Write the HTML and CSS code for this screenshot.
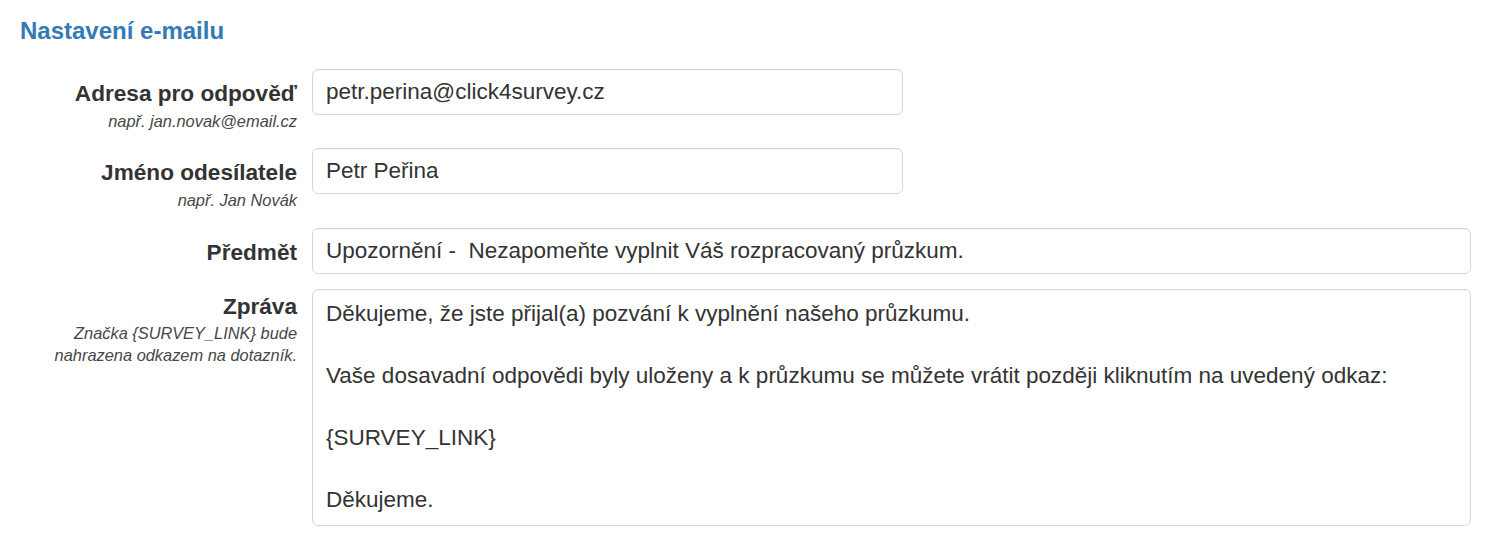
FILE: index.html
```html
<!DOCTYPE html>
<html lang="cs">
<head>
<meta charset="utf-8">
<title>Nastavení e-mailu</title>
<link rel="stylesheet" href="styles.css">
</head>
<body>
<div class="page">
  <h2 class="title">Nastavení e-mailu</h2>
  <form class="form">
    <div class="row">
      <div class="label-col">
        <label class="label" for="reply">Adresa pro odpověď</label>
        <div class="hint">např. jan.novak@email.cz</div>
      </div>
      <div class="field-col">
        <input class="control narrow" id="reply" type="text" value="petr.perina@click4survey.cz">
      </div>
    </div>
    <div class="row">
      <div class="label-col">
        <label class="label" for="sender">Jméno odesílatele</label>
        <div class="hint">např. Jan Novák</div>
      </div>
      <div class="field-col">
        <input class="control narrow" id="sender" type="text" value="Petr Peřina">
      </div>
    </div>
    <div class="row">
      <div class="label-col">
        <label class="label" for="subject">Předmět</label>
      </div>
      <div class="field-col">
        <input class="control" id="subject" type="text" value="Upozornění -  Nezapomeňte vyplnit Váš rozpracovaný průzkum.">
      </div>
    </div>
    <div class="row">
      <div class="label-col">
        <label class="label label-top" for="message">Zpráva</label>
        <div class="hint hint-tight">Značka {SURVEY_LINK} bude nahrazena odkazem na dotazník.</div>
      </div>
      <div class="field-col">
        <textarea class="control area" id="message">Děkujeme, že jste přijal(a) pozvání k vyplnění našeho průzkumu.

Vaše dosavadní odpovědi byly uloženy a k průzkumu se můžete vrátit později kliknutím na uvedený odkaz:

{SURVEY_LINK}

Děkujeme.</textarea>
      </div>
    </div>
  </form>
</div>
</body>
</html>
```
FILE: styles.css
```css
html, body {
  margin: 0;
  padding: 0;
  background: #ffffff;
}

body {
  font-family: "Liberation Sans", Arial, Helvetica, sans-serif;
  color: #333333;
}

.page {
  padding: 18px 39px 0 20px;
}

.title {
  margin: 0 0 25px 0;
  font-size: 24px;
  line-height: 26px;
  font-weight: 700;
  color: #337ab7;
}

.form {
  display: flex;
  flex-direction: column;
  gap: 15.3px;
}

.row {
  display: grid;
  grid-template-columns: 277px 1fr;
  column-gap: 15px;
  align-items: start;
}

.label-col {
  text-align: right;
}

.label {
  display: block;
  padding-top: 9px;
  font-size: 22.6px;
  line-height: 31px;
  font-weight: 700;
  color: #333333;
}

.label-top {
  padding-top: 2px;
}

.hint {
  font-size: 16.4px;
  line-height: 24px;
  font-style: italic;
  color: #474747;
  padding-left: 30px;
}

.hint-tight {
  line-height: 22px;
}

.control {
  display: block;
  box-sizing: border-box;
  width: 100%;
  height: 46px;
  margin: 0;
  padding: 0 13px;
  font-family: "Liberation Sans", Arial, Helvetica, sans-serif;
  font-size: 22.5px;
  color: #333333;
  background: #ffffff;
  border: 1px solid #d5d8de;
  border-radius: 6px;
  box-shadow: inset 0 1px 1px rgba(0, 0, 0, 0.05);
  outline: none;
}

.narrow {
  width: 591px;
}

.area {
  height: 237px;
  padding: 8px 13px;
  line-height: 31px;
  resize: none;
  overflow: hidden;
}
```
